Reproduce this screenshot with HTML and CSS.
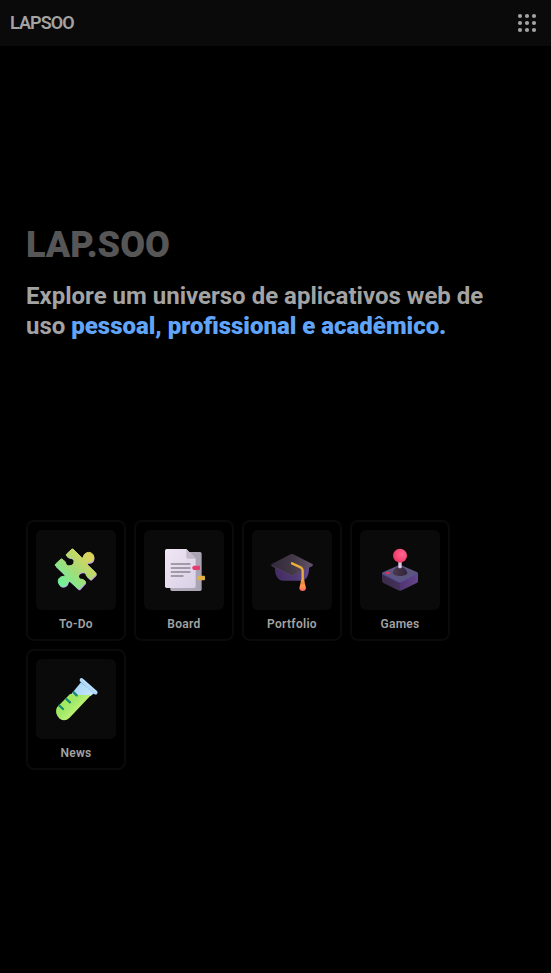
FILE: index.html
```html
<!DOCTYPE html>
<html lang="pt-BR">
<head>
<meta charset="utf-8">
<meta name="viewport" content="width=device-width, initial-scale=1">
<title>LAPSOO</title>
<link rel="stylesheet" href="styles.css">
</head>
<body>
<header class="topbar">
  <a class="brand" href="#">LAPSOO</a>
  <button class="menu" type="button" aria-label="Aplicativos">
    <svg viewBox="0 0 20 20" width="20" height="20" fill="currentColor" aria-hidden="true">
      <circle cx="3" cy="3" r="2.1"/><circle cx="10" cy="3" r="2.1"/><circle cx="17" cy="3" r="2.1"/>
      <circle cx="3" cy="10" r="2.1"/><circle cx="10" cy="10" r="2.1"/><circle cx="17" cy="10" r="2.1"/>
      <circle cx="3" cy="17" r="2.1"/><circle cx="10" cy="17" r="2.1"/><circle cx="17" cy="17" r="2.1"/>
    </svg>
  </button>
</header>
<main class="page">
  <section class="hero">
    <h1 class="title">LAP.SOO</h1>
    <p class="lead">Explore um universo de aplicativos web de uso <strong>pessoal, profissional e acadêmico.</strong></p>
  </section>
  <nav class="apps" aria-label="Aplicativos">
    <a class="card" href="#">
      <span class="tile">
        <svg class="icon" viewBox="6 3 144 144" aria-hidden="true">
          <defs>
            <linearGradient id="pz" x1="35" y1="120" x2="120" y2="35" gradientUnits="userSpaceOnUse"><stop offset="0" stop-color="#6ff09a"/><stop offset=".5" stop-color="#a5dc77"/><stop offset="1" stop-color="#dcd35c"/></linearGradient>
            <path id="piece" d="M66 12Q69 11 72 15L94 37Q98 41 100 36C102 19 128 17 131 34C133 44 126 53 115 52Q108 54 112 59L137 83Q140 86 137 89L124 102Q121 104 117 100L113 96Q108 93 108 88C107 77 87 79 85 90C84 98 89 103 96 103Q101 104 105 108Q108 111 105 114L90 130Q87 133 83 130L59 108Q55 105 54 111C51 127 30 128 26 115C21 101 33 93 43 94Q47 92 43 88L17 63Q14 60 17 57L32 43Q35 40 39 44L44 49Q47 51 47 55C50 67 70 64 72 51C73 43 67 38 59 38Q54 37 50 33Q47 30 50 27Z"/>
          </defs>
          <use href="#piece" x="2" y="4" fill="#c4a0ee"/>
          <use href="#piece" fill="url(#pz)" stroke="url(#pz)" stroke-width="3"/>
        </svg>
      </span>
      <span class="label">To-Do</span>
    </a>
    <a class="card" href="#">
      <span class="tile">
        <svg class="icon" viewBox="6 12 144 144" aria-hidden="true">
          <defs>
            <linearGradient id="pp" x1="0" y1="0" x2="1" y2="1"><stop offset="0" stop-color="#f0e6f4"/><stop offset="1" stop-color="#d9d0e6"/></linearGradient>
            <linearGradient id="pb" x1="0" y1="0" x2="1" y2="0"><stop offset="0" stop-color="#b4afbb"/><stop offset="1" stop-color="#a8a2b2"/></linearGradient>
          </defs>
          <path d="M37 30H126Q131 30 131 35V142Q131 147 126 147H42Q37 147 37 142Z" fill="url(#pb)"/>
          <path d="M26 21H85L113 50V133Q113 138 108 138H26Q21 138 21 133V26Q21 21 26 21Z" fill="url(#pp)"/>
          <path d="M85 21L113 50H90Q85 50 85 45Z" fill="#c3bac9"/>
          <path d="M40 66H96M40 78H96M40 90H96M40 102H75" stroke="#8c8790" stroke-width="4" stroke-linecap="round"/>
          <path d="M107 71H123Q126 71 126 74V81Q126 84 123 84H107Q104 81 102 77Q104 74 107 71Z" fill="#e83b6d"/>
          <path d="M122 101H138Q141 101 141 104V112Q141 115 138 115H122Q119 112 117 108Q119 104 122 101Z" fill="#e0b145"/>
        </svg>
      </span>
      <span class="label">Board</span>
    </a>
    <a class="card" href="#">
      <span class="tile">
        <svg class="icon" viewBox="6 3 144 144" aria-hidden="true">
          <defs>
            <linearGradient id="ct" x1="0" y1="0" x2="1" y2="0"><stop offset="0" stop-color="#30283a"/><stop offset=".55" stop-color="#453947"/><stop offset="1" stop-color="#66556f"/></linearGradient>
            <linearGradient id="cb" x1="0" y1="0" x2="1" y2="0"><stop offset="0" stop-color="#432b63"/><stop offset=".6" stop-color="#4f3972"/><stop offset="1" stop-color="#65488d"/></linearGradient>
            <linearGradient id="ts" x1="0" y1="0" x2="0" y2="1"><stop offset="0" stop-color="#f59a38"/><stop offset=".6" stop-color="#ff9450"/><stop offset="1" stop-color="#ff6368"/></linearGradient>
          </defs>
          <path d="M27 66H129C130 90 121 107 106 107H51C36 107 25 90 27 66Z" fill="url(#cb)"/>
          <path d="M74 28Q78 26 82 28L139 57Q143 60 139 63L83 90Q78 93 73 90L17 63Q13 60 17 57Z" fill="url(#ct)"/>
          <path d="M17 62L73 90Q78 93 83 90L139 62" fill="none" stroke="#54456a" stroke-width="2"/>
          <path d="M78 55L104 67Q110 70 110 77V109" fill="none" stroke="#e9ae3e" stroke-width="7" stroke-linecap="round" stroke-linejoin="round"/>
          <path d="M105 104H115L116 113L120 129Q119 138 110 138Q101 138 100 129L104 113Z" fill="url(#ts)"/>
          <path d="M104 114H116" stroke="#d97532" stroke-width="2"/>
        </svg>
      </span>
      <span class="label">Portfolio</span>
    </a>
    <a class="card" href="#">
      <span class="tile">
        <svg class="icon" viewBox="0 12 144 144" aria-hidden="true">
          <defs>
            <radialGradient id="bl" cx=".65" cy=".4" r=".7"><stop offset="0" stop-color="#ff6792"/><stop offset=".6" stop-color="#f64774"/><stop offset="1" stop-color="#e43457"/></radialGradient>
            <linearGradient id="jl" x1="0" y1="0" x2="1" y2="0"><stop offset="0" stop-color="#3b2b49"/><stop offset="1" stop-color="#43315c"/></linearGradient>
            <linearGradient id="jr" x1="0" y1="0" x2="1" y2="0"><stop offset="0" stop-color="#513570"/><stop offset="1" stop-color="#64468b"/></linearGradient>
            <linearGradient id="kn" x1="0" y1="0" x2="1" y2="0"><stop offset="0" stop-color="#4d394f"/><stop offset="1" stop-color="#2f243b"/></linearGradient>
          </defs>
          <path d="M18 94L72 121V146Q69 146 65 144L22 123Q18 121 18 117Z" fill="url(#jl)"/>
          <path d="M126 94L72 121V146Q75 146 79 144L122 123Q126 121 126 117Z" fill="url(#jr)"/>
          <path d="M68 70Q72 68 76 70L124 91Q128 94 124 97L76 120Q72 122 68 120L20 97Q16 94 20 91Z" fill="#5c5580"/>
          <path d="M18 95L68 120Q72 122 76 120L126 95" fill="none" stroke="#5347a0" stroke-width="3"/>
          <ellipse cx="36" cy="93" rx="6" ry="4" fill="#e92e60"/>
          <path d="M61 77Q72 70 83 77C89 82 94 88 94 93C93 105 51 105 50 93C50 88 55 82 61 77Z" fill="url(#kn)"/>
          <path d="M67 56H77V77Q72 80 67 77Z" fill="#d7cbe4"/>
          <circle cx="72" cy="41" r="21" fill="url(#bl)"/>
        </svg>
      </span>
      <span class="label">Games</span>
    </a>
    <a class="card" href="#">
      <span class="tile">
        <svg class="icon" viewBox="6 9 144 144" aria-hidden="true">
          <defs>
            <linearGradient id="lq" x1="42" y1="88" x2="80" y2="126" gradientUnits="userSpaceOnUse"><stop offset="0" stop-color="#a1e85b"/><stop offset=".4" stop-color="#a2e96b"/><stop offset="1" stop-color="#c4f474"/></linearGradient>
            <linearGradient id="gl" x1="80" y1="30" x2="125" y2="70" gradientUnits="userSpaceOnUse"><stop offset="0" stop-color="#a4d4f8"/><stop offset="1" stop-color="#c5e6ff"/></linearGradient>
          </defs>
          <path d="M93 31L132 64L122 72H59Z" fill="url(#gl)"/>
          <path d="M60 66Q92 70 124 68L58 138Q45 150 29 140Q12 124 21 106Z" fill="url(#lq)"/>
          <path d="M90 20Q94 16 100 21L141 57Q145 62 141 66Q137 70 131 65L91 29Q87 24 90 20Z" fill="#afd8fb"/>
          <path d="M99 24L138 59" stroke="#c6e6ff" stroke-width="3" stroke-linecap="round"/>
          <path d="M28 101L39 111M49 81L60 91M71 61L80 70" stroke="#168872" stroke-width="7" stroke-linecap="round"/>
        </svg>
      </span>
      <span class="label">News</span>
    </a>
  </nav>
</main>
</body>
</html>
```

FILE: styles.css
```css
* {
  box-sizing: border-box;
}

body {
  margin: 0;
  background: #000;
  color: #a3a3a3;
  font-family: Roboto, "Liberation Sans", sans-serif;
}

a {
  color: inherit;
  text-decoration: none;
}

.topbar {
  display: flex;
  align-items: center;
  justify-content: space-between;
  height: 46px;
  padding: 0 14px 0 10px;
  background: #0a0a0a;
}

.brand {
  font-size: 18px;
  font-weight: 600;
  line-height: 28px;
  letter-spacing: -0.05em;
}

.menu {
  display: flex;
  padding: 0;
  border: 0;
  background: none;
  color: #a3a3a3;
  cursor: pointer;
}

.page {
  padding: 179px 26px 40px;
}

.hero {
  margin-bottom: 179px;
}

.title {
  margin: 0 0 16px;
  color: #565656;
  font-size: 36px;
  font-weight: 900;
  line-height: 40px;
}

.lead {
  margin: 0;
  font-size: 24px;
  font-weight: 700;
  line-height: 30px;
}

.lead strong {
  color: #60a5fa;
  font-weight: 900;
}

.apps {
  display: flex;
  flex-wrap: wrap;
  gap: 8px;
}

.card {
  display: flex;
  flex-direction: column;
  align-items: center;
  gap: 5px;
  padding: 8px 8px 6px;
  border: 2px solid #0a0a0a;
  border-radius: 8px;
}

.tile {
  display: grid;
  place-items: center;
  width: 80px;
  height: 80px;
  border-radius: 6px;
  background: #0a0a0a;
}

.icon {
  width: 48px;
  height: 48px;
}

.label {
  font-size: 12px;
  font-weight: 600;
  line-height: 18px;
  letter-spacing: 0.025em;
}
```
